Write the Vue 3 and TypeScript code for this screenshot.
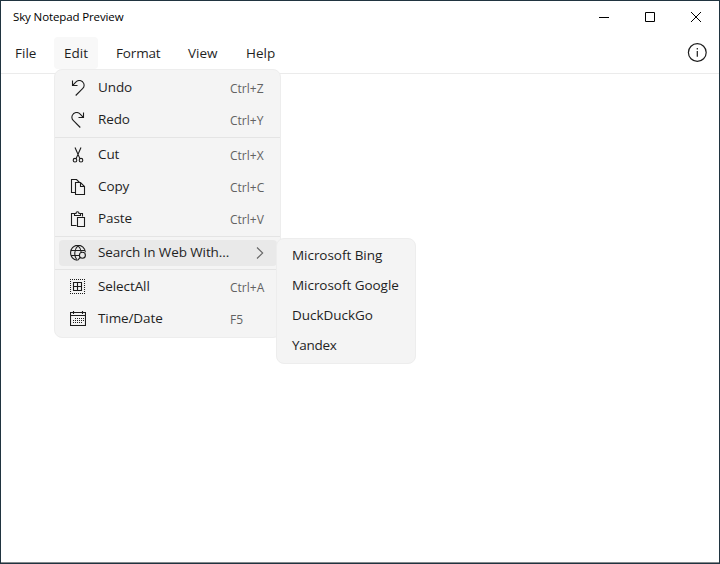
<script setup lang="ts">
import { ref } from 'vue'

interface MenuItem {
  id: string
  label: string
  shortcut?: string
}

const tabs: string[] = ['File', 'Edit', 'Format', 'View', 'Help']
const active = ref('Edit')

const groups: MenuItem[][] = [
  [
    { id: 'undo', label: 'Undo', shortcut: 'Ctrl+Z' },
    { id: 'redo', label: 'Redo', shortcut: 'Ctrl+Y' },
  ],
  [
    { id: 'cut', label: 'Cut', shortcut: 'Ctrl+X' },
    { id: 'copy', label: 'Copy', shortcut: 'Ctrl+C' },
    { id: 'paste', label: 'Paste', shortcut: 'Ctrl+V' },
  ],
  [{ id: 'search', label: 'Search In Web With...' }],
  [
    { id: 'select', label: 'SelectAll', shortcut: 'Ctrl+A' },
    { id: 'time', label: 'Time/Date', shortcut: 'F5' },
  ],
]

const engines: string[] = ['Microsoft Bing', 'Microsoft Google', 'DuckDuckGo', 'Yandex']
</script>

<template>
  <div class="window">
    <header class="titlebar">
      <span class="title">Sky Notepad Preview</span>
      <div class="controls">
        <svg viewBox="0 0 10 10"><path d="M0 5.5h10" /></svg>
        <svg viewBox="0 0 10 10"><path d="M.5.5h9v9h-9z" /></svg>
        <svg viewBox="0 0 10 10"><path d="M0 0l10 10M10 0L0 10" /></svg>
      </div>
    </header>

    <nav class="menubar">
      <button
        v-for="tab in tabs"
        :key="tab"
        class="tab"
        :class="[tab.toLowerCase(), { active: tab === active }]"
        @click="active = tab"
      >{{ tab }}</button>
      <svg class="info" viewBox="0 0 20 20">
        <circle cx="10.3" cy="9.5" r="8.9" />
        <path d="M10.3 8v5.8M10.3 5v1.5" />
      </svg>
    </nav>

    <main class="page"></main>

    <div class="flyout menu">
      <template v-for="(group, g) in groups" :key="g">
        <div v-if="g > 0" class="separator"></div>
        <div v-for="item in group" :key="item.id" class="item" :class="item.id">
          <svg class="icon" viewBox="0 0 16 16">
            <path v-if="item.id === 'undo'" d="M2.5.5v5h5M2.7 5.3L5.8 2.1C7.8.3 10.5.1 12.6 1.8c2 1.8 2 4.8.2 6.6L5.7 15.5" />
            <path v-else-if="item.id === 'redo'" d="M13.5.5v5h-5M13.3 5.3L10.2 2.1C8.2.3 5.5.1 3.4 1.8c-2 1.8-2 4.8-.2 6.6l7.1 7.1" />
            <g v-else-if="item.id === 'cut'">
              <path d="M5 .5l4.9 11.1M11 .5L6.1 11.6" />
              <circle cx="5" cy="13.2" r="1.8" />
              <circle cx="11" cy="13.2" r="1.8" />
            </g>
            <path v-else-if="item.id === 'copy'" d="M5.5 13.5h-4V.5h5l3 3M5.5 3.5h5l4 4v8h-9zM10.5 3.5v4h4" />
            <path v-else-if="item.id === 'paste'" d="M6.5 14.5h-5v-12h3M10.5 2.5h2v3M4.5 4.5v-2H6C6 .2 9 .2 9 2.5h1.5v2zM7.5 6.5h7v9h-7z" />
            <g v-else-if="item.id === 'search'">
              <path d="M7.2 15.2C3.2 14.8.6 11.6.6 8a7.4 7.4 0 0 1 14.8-.8M1.2 5.5h13.6M1.2 10.5H9M6.6 14.2C3.9 10.5 4.1 4.5 8 .7M8 .7c2.1 2 3.1 4.3 3.2 6.5" />
              <circle class="lens" cx="12.4" cy="10.2" r="3" />
              <path d="M10.3 12.4l-2.8 2.9" />
            </g>
            <g v-else-if="item.id === 'select'">
              <path class="dots" d="M0 .5h16M0 14.5h16M.5 2v12M14.5 2v12" />
              <path d="M3.5 3.5h8v8h-8zM7.5 3.5v8M3.5 7.5h8" />
            </g>
            <g v-else>
              <path d="M.5 1.5h15v13H.5zM.5 4.5h15M3.5 0v3M12.5 0v3" />
              <path class="days" d="M5 7.5h9M3 9.5h11M3 11.5h9" />
            </g>
          </svg>
          <span class="label">{{ item.label }}</span>
          <span v-if="item.shortcut" class="shortcut">{{ item.shortcut }}</span>
          <svg v-else class="chevron" viewBox="0 0 8 12"><path d="M1 .5L6.7 6 1 11.5" /></svg>
        </div>
      </template>
    </div>

    <div class="flyout submenu">
      <div v-for="engine in engines" :key="engine" class="engine">{{ engine }}</div>
    </div>
  </div>
</template>

<style>
body {
  overflow: hidden;
}
</style>

<style scoped>
.window {
  position: relative;
  box-sizing: border-box;
  width: 720px;
  height: 564px;
  display: flex;
  flex-direction: column;
  background: #fff;
  border: 1px solid #203440;
  font-family: 'Open Sans', 'Noto Sans', sans-serif;
  font-size: 13.5px;
  color: #1f1f1f;
}
svg {
  display: block;
  fill: none;
  stroke: #1c1c1c;
  stroke-width: 1.1;
}
.titlebar {
  height: 32px;
  display: flex;
  justify-content: space-between;
  align-items: center;
  padding: 0 18px 0 12px;
}
.title {
  font-size: 11.5px;
  color: #000;
  white-space: nowrap;
  letter-spacing: -0.12px;
  padding-bottom: 2px;
}
.controls {
  display: flex;
  gap: 36px;
}
.controls svg {
  width: 10px;
  height: 10px;
  stroke: #000;
  stroke-width: 1;
}
.menubar {
  height: 40px;
  display: flex;
  align-items: center;
  padding: 0 12px 0 3px;
  border-bottom: 1px solid #ebebeb;
}
.tab {
  height: 32px;
  padding: 0 11px;
  border: 0;
  border-radius: 4px;
  background: transparent;
  font: inherit;
  color: inherit;
  text-align: left;
}
.file { width: 50px; }
.edit { width: 44px; padding: 0 10px; margin-right: 7px; }
.format { width: 72px; letter-spacing: -0.15px; }
.view { width: 58px; }
.help { width: 60px; }
.tab.active {
  background: #f8f8f8;
}
.info {
  width: 20px;
  height: 20px;
  margin-left: auto;
  stroke-width: 1.2;
}
.page {
  flex: 1;
  border-bottom: 1px solid #858a8d;
}
.flyout {
  position: absolute;
  box-sizing: border-box;
  border: 1px solid #ededed;
  border-radius: 8px;
  background: #f4f4f4;
}
.menu {
  left: 53px;
  top: 68px;
  width: 227px;
  height: 269px;
  padding-top: 2px;
  display: flex;
  flex-direction: column;
}
.item {
  flex: none;
  height: 32px;
  display: flex;
  align-items: center;
  padding-left: 15px;
}
.icon {
  width: 16px;
  height: 16px;
  margin-right: 12px;
}
.label {
  width: 132px;
  white-space: nowrap;
  letter-spacing: -0.1px;
  padding-bottom: 2px;
}
.shortcut {
  font-size: 12px;
  color: #626262;
}
.item.search {
  height: 26px;
  margin: 2px 3px 2px 4px;
  padding-left: 11px;
  border-radius: 4px;
  background: #e9e9e9;
}
.search .label {
  padding-bottom: 3px;
}
.lens {
  fill: #e9e9e9;
}
.chevron {
  width: 8px;
  height: 12px;
  margin-left: 25.5px;
  stroke: #666;
}
.separator {
  flex: none;
  height: 1px;
  margin: 1px 0;
  background: #e4e4e4;
}
.dots,
.days {
  stroke-dasharray: 1 1;
}
.submenu {
  left: 275px;
  top: 237px;
  width: 140px;
  height: 126px;
  padding: 1px 0 2px 15px;
}
.engine {
  height: 30px;
  line-height: 30px;
  white-space: nowrap;
  letter-spacing: -0.04px;
}
.engine:last-child {
  letter-spacing: -0.3px;
}
</style>
